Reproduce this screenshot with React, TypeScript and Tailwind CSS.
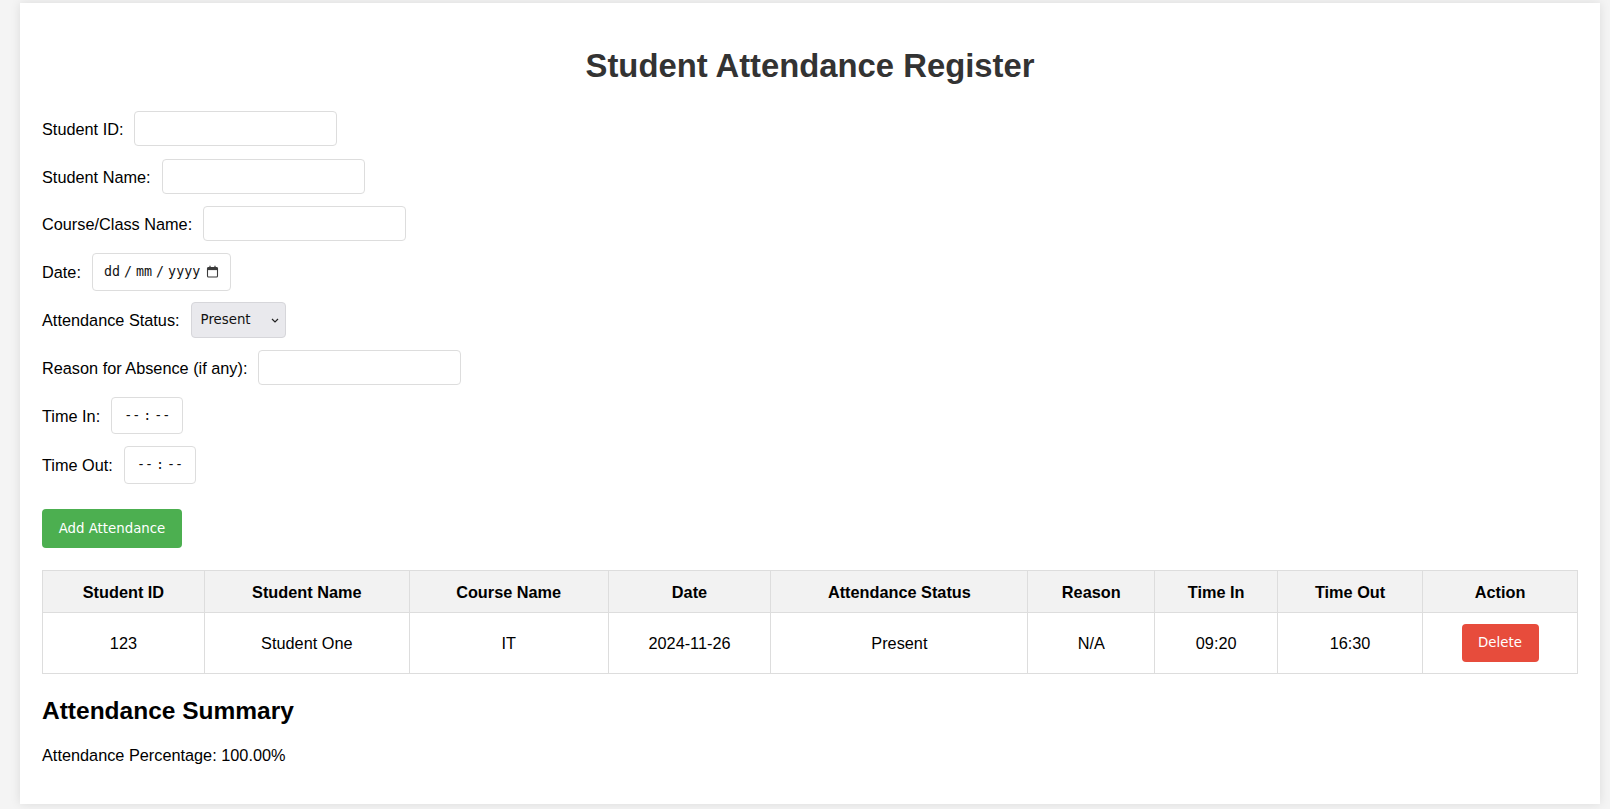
import React from "react";

function TextInput() {
  return (
    <input
      type="text"
      className="block h-[35px] w-[203px] shrink-0 rounded-[4px] border border-[#dddddd] bg-white outline-none"
    />
  );
}

function CalendarIcon() {
  return (
    <svg width="13" height="13" viewBox="0 0 13 13" className="block">
      <rect x="1.5" y="2.5" width="10" height="9.5" rx="1" fill="none" stroke="#3b3b3b" strokeWidth="1.1" />
      <rect x="1.5" y="2.5" width="10" height="2.6" fill="#3b3b3b" />
      <line x1="4" y1="0.8" x2="4" y2="3" stroke="#3b3b3b" strokeWidth="1.2" />
      <line x1="9" y1="0.8" x2="9" y2="3" stroke="#3b3b3b" strokeWidth="1.2" />
    </svg>
  );
}

function Row({
  label,
  children,
  h,
  mb,
}: {
  label: string;
  children: React.ReactNode;
  h: string;
  mb: string;
}) {
  return (
    <div className={"flex items-center gap-[11px] " + h + " " + mb}>
      <span className="text-[16.3px] leading-[18px] whitespace-nowrap">{label}</span>
      {children}
    </div>
  );
}

const cols = [
  { name: "Student ID", w: "w-[162px]", v: "123" },
  { name: "Student Name", w: "w-[205px]", v: "Student One" },
  { name: "Course Name", w: "w-[199px]", v: "IT" },
  { name: "Date", w: "w-[163px]", v: "2024-11-26" },
  { name: "Attendance Status", w: "w-[257px]", v: "Present" },
  { name: "Reason", w: "w-[127px]", v: "N/A" },
  { name: "Time In", w: "w-[123px]", v: "09:20" },
  { name: "Time Out", w: "w-[145px]", v: "16:30" },
  { name: "Action", w: "w-[155px]", v: "" },
];

export default function App() {
  return (
    <div className="min-h-[809px] bg-[#f4f4f4] pt-[3px] pb-[6px] pl-[20px] pr-[10px] font-['Liberation_Sans',Arial,sans-serif] text-black">
      <div className="bg-white shadow-[0_0_10px_rgba(0,0,0,0.1)] px-[22px] pt-[44px] pb-[40px]">
        <h1 className="m-0 text-center text-[32.8px] leading-[37px] font-bold text-[#333333]">
          Student Attendance Register
        </h1>

        <div className="mt-[27px] flex flex-col">
          <Row label="Student ID:" h="h-[35px]" mb="mb-[13px]">
            <TextInput />
          </Row>
          <Row label="Student Name:" h="h-[35px]" mb="mb-[12px]">
            <TextInput />
          </Row>
          <Row label="Course/Class Name:" h="h-[35px]" mb="mb-[12px]">
            <TextInput />
          </Row>
          <Row label="Date:" h="h-[38px]" mb="mb-[11px]">
            <div className="flex h-[38px] w-[139px] shrink-0 items-center rounded-[4px] border border-[#dddddd] bg-white pl-[11px] font-['DejaVu_Sans_Mono',monospace] text-[13.33px] text-[#111]">
              <span>dd</span>
              <span className="mx-[4px]">/</span>
              <span>mm</span>
              <span className="mx-[4px]">/</span>
              <span>yyyy</span>
              <span className="ml-[6px] mb-[2px]">
                <CalendarIcon />
              </span>
            </div>
          </Row>
          <Row label="Attendance Status:" h="h-[36px]" mb="mb-[12px]">
            <div className="flex h-[36px] w-[95px] shrink-0 items-center justify-between rounded-[4px] border border-[#d6d6da] bg-[#e9e9ed] pl-[9px] pr-[6px] font-['DejaVu_Sans',sans-serif] text-[13.33px] text-[#111]">
              <span>Present</span>
              <svg width="8" height="5" viewBox="0 0 8 5" className="block">
                <path d="M1 1 L4 4 L7 1" fill="none" stroke="#222" strokeWidth="1.2" />
              </svg>
            </div>
          </Row>
          <Row label="Reason for Absence (if any):" h="h-[35px]" mb="mb-[12px]">
            <TextInput />
          </Row>
          <Row label="Time In:" h="h-[37px]" mb="mb-[12px]">
            <div className="flex h-[37px] w-[72px] shrink-0 items-center rounded-[4px] border border-[#dddddd] bg-white pl-[12px] font-['DejaVu_Sans_Mono',monospace] text-[13.33px] text-[#111]">
              <span>--</span>
              <span className="mx-[3px]">:</span>
              <span>--</span>
            </div>
          </Row>
          <Row label="Time Out:" h="h-[38px]" mb="mb-[25px]">
            <div className="flex h-[38px] w-[72px] shrink-0 items-center rounded-[4px] border border-[#dddddd] bg-white pl-[12px] font-['DejaVu_Sans_Mono',monospace] text-[13.33px] text-[#111]">
              <span>--</span>
              <span className="mx-[3px]">:</span>
              <span>--</span>
            </div>
          </Row>
        </div>

        <button className="flex h-[39px] w-[140px] items-center justify-center rounded-[4px] bg-[#4caf50] font-['DejaVu_Sans',sans-serif] text-[13.33px] text-white">
          Add Attendance
        </button>

        <table className="mt-[22px] w-[1536px] border-collapse text-[16.3px]">
          <thead>
            <tr className="bg-[#f2f2f2]">
              {cols.map((c) => (
                <th
                  key={c.name}
                  className={c.w + " h-[42px] border border-[#dddddd] p-0 text-center align-middle font-bold leading-[18px]"}
                >
                  {c.name}
                </th>
              ))}
            </tr>
          </thead>
          <tbody>
            <tr>
              {cols.map((c) => (
                <td
                  key={c.name}
                  className="h-[61px] border border-[#dddddd] p-0 text-center align-middle leading-[18px]"
                >
                  {c.name === "Action" ? (
                    <div className="flex justify-center">
                      <button className="flex h-[38px] w-[77px] items-center justify-center rounded-[4px] bg-[#e74c3c] font-['DejaVu_Sans',sans-serif] text-[13.33px] text-white">
                        Delete
                      </button>
                    </div>
                  ) : (
                    c.v
                  )}
                </td>
              ))}
            </tr>
          </tbody>
        </table>

        <h2 className="mt-[23px] text-[24.5px] leading-[28px] font-bold">Attendance Summary</h2>
        <p className="mt-[21px] text-[16.3px] leading-[18px]">Attendance Percentage: 100.00%</p>
      </div>
    </div>
  );
}
